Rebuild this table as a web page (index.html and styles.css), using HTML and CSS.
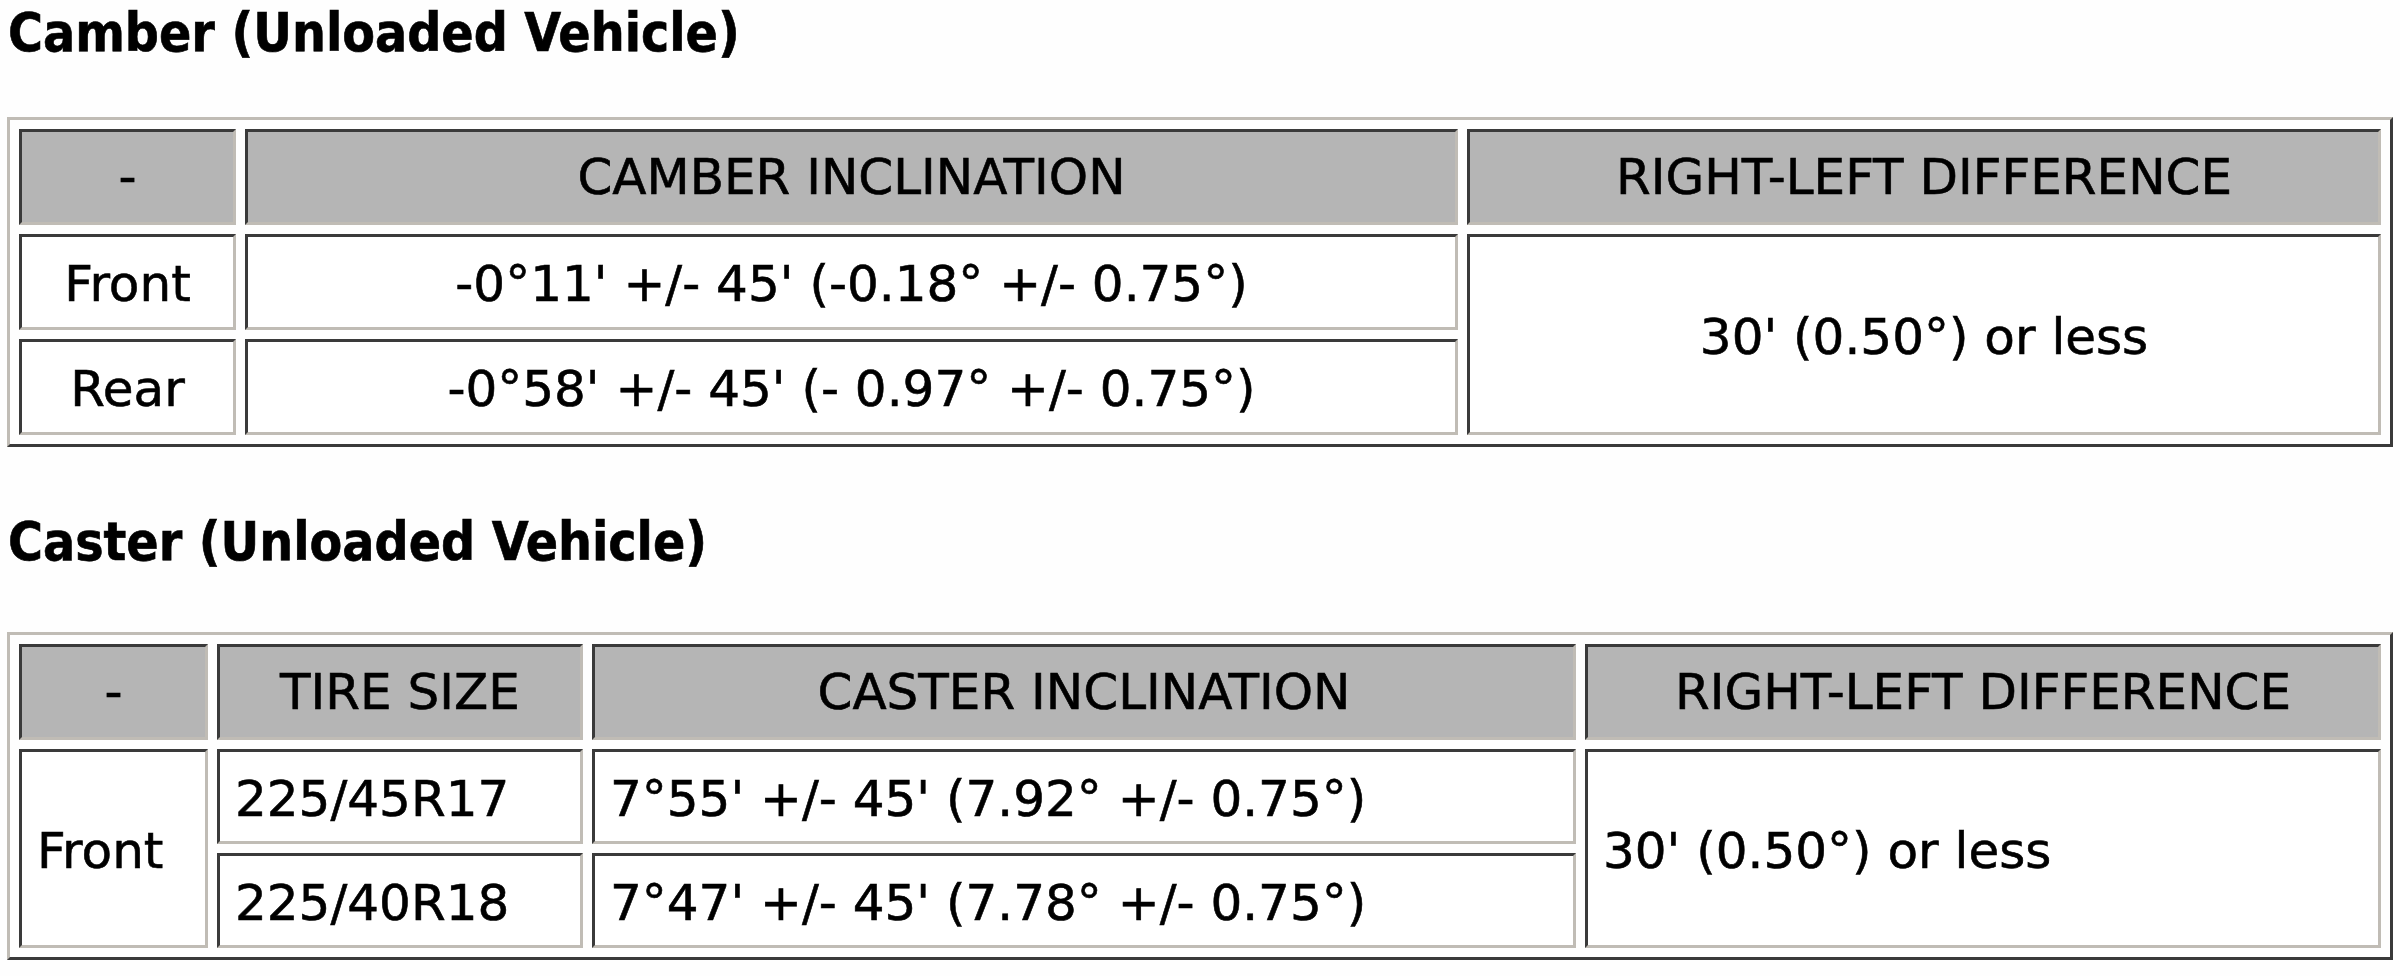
FILE: index.html
```html
<!DOCTYPE html>
<html lang="en">
<head>
<meta charset="utf-8">
<title>Camber and Caster</title>
<link rel="stylesheet" href="styles.css">
</head>
<body>
<h2 class="title title-first">Camber (Unloaded Vehicle)</h2>
<table class="spec spec-camber">
  <tr class="head-row">
    <th class="c-camber-1">-</th>
    <th class="c-camber-2">CAMBER INCLINATION</th>
    <th class="c-camber-3">RIGHT-LEFT DIFFERENCE</th>
  </tr>
  <tr>
    <td class="center">Front</td>
    <td class="center">-0°11' +/- 45' (-0.18° +/- 0.75°)</td>
    <td class="center" rowspan="2">30' (0.50°) or less</td>
  </tr>
  <tr>
    <td class="center">Rear</td>
    <td class="center">-0°58' +/- 45' (- 0.97° +/- 0.75°)</td>
  </tr>
</table>

<h2 class="title title-second">Caster (Unloaded Vehicle)</h2>
<table class="spec spec-caster">
  <tr class="head-row">
    <th class="c-caster-1">-</th>
    <th class="c-caster-2">TIRE SIZE</th>
    <th class="c-caster-3">CASTER INCLINATION</th>
    <th class="c-caster-4">RIGHT-LEFT DIFFERENCE</th>
  </tr>
  <tr class="short-row">
    <td class="left" rowspan="2">Front</td>
    <td class="left">225/45R17</td>
    <td class="left">7°55' +/- 45' (7.92° +/- 0.75°)</td>
    <td class="left" rowspan="2">30' (0.50°) or less</td>
  </tr>
  <tr class="short-row">
    <td class="left">225/40R18</td>
    <td class="left">7°47' +/- 45' (7.78° +/- 0.75°)</td>
  </tr>
</table>
</body>
</html>
```
FILE: styles.css
```css
html, body {
  margin: 0;
  padding: 0;
  background: #fefefe;
}
body {
  padding: 3px 7px 0 7px;
  color: #000;
  font-family: "DejaVu Sans", Verdana, sans-serif;
}
.title {
  margin: 0;
  padding-left: 1px;
  font-family: "DejaVu Sans Condensed", "DejaVu Sans", sans-serif;
  font-weight: bold;
  font-size: 53px;
  line-height: 60px;
  white-space: nowrap;
  -webkit-text-stroke: 0.6px #000;
}
.title-first {
  margin-bottom: 54px;
}
.title-second {
  margin-top: 65px;
  margin-bottom: 60px;
}
.spec {
  width: 2386px;
  table-layout: fixed;
  border-collapse: separate;
  border-spacing: 9px;
  border-style: solid;
  border-width: 3px;
  border-color: #c0bcb5 #3a3a3a #3a3a3a #c0bcb5;
}
.spec th,
.spec td {
  box-sizing: border-box;
  padding: 0;
  border-style: solid;
  border-width: 3px;
  border-color: #3a3a3a #c0bcb5 #c0bcb5 #3a3a3a;
  font-size: 50px;
  font-weight: normal;
  white-space: nowrap;
  -webkit-text-stroke: 0.6px #000;
}
.spec th {
  background: #b5b5b5;
  text-align: center;
}
.spec td {
  background: #fff;
  padding-top: 4px;
}
.spec tr {
  height: 96px;
}
.spec-caster .short-row {
  height: 95px;
}
.center {
  text-align: center;
}
.spec td.left {
  text-align: left;
  padding-left: 15px;
}
.c-camber-1 { width: 217px; }
.c-camber-2 { width: 1213px; }
.c-camber-3 { width: 914px; }
.c-caster-1 { width: 189px; }
.c-caster-2 { width: 366px; }
.c-caster-3 { width: 984px; }
.c-caster-4 { width: 796px; }
```
